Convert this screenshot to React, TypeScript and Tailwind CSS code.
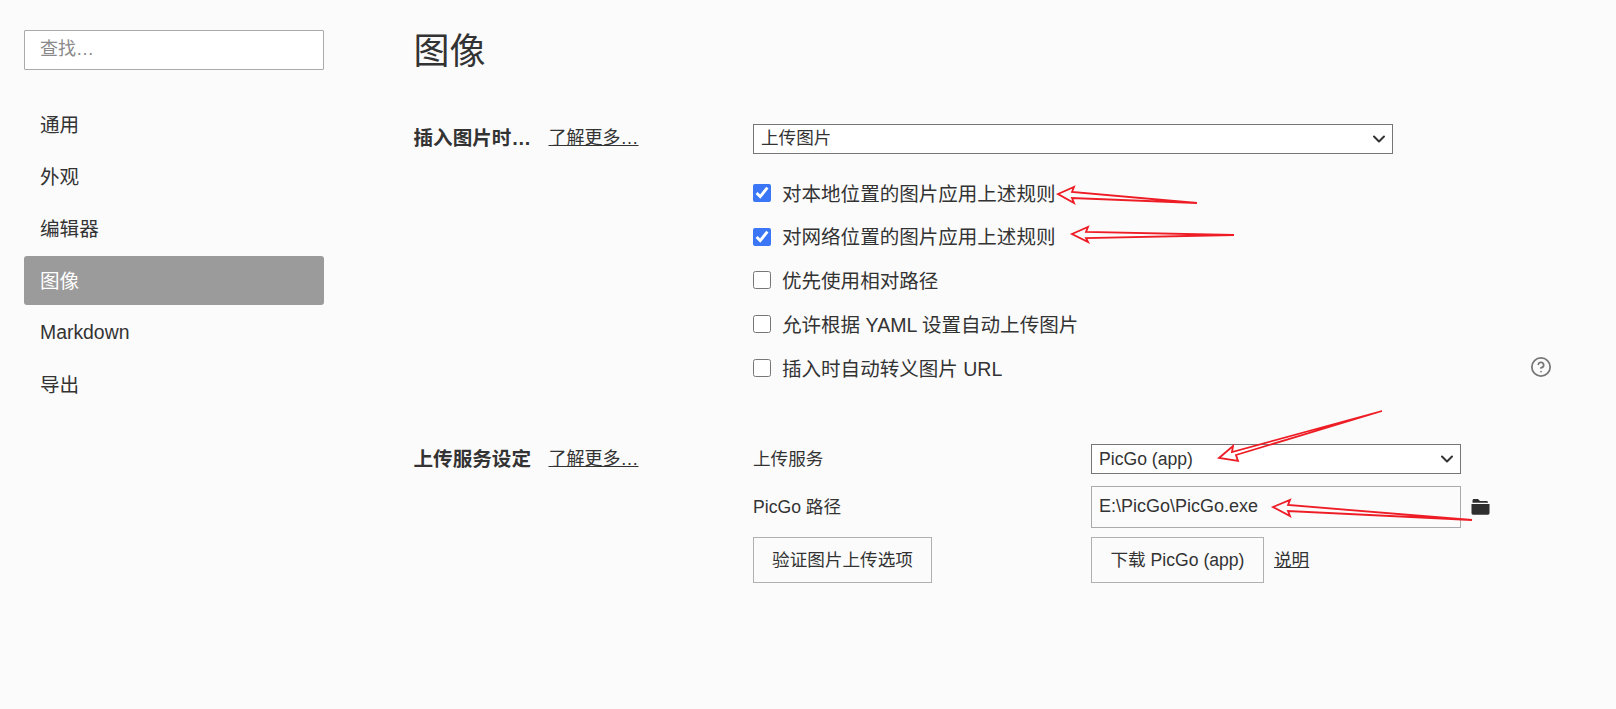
import { ChevronDown, CircleHelp } from "lucide-react";

const font = { fontFamily: '"Liberation Sans", "Noto Sans CJK SC", sans-serif' };

const nav = ["通用", "外观", "编辑器", "图像", "Markdown", "导出"];
const checks: [string, boolean, string][] = [
  ["对本地位置的图片应用上述规则", true, "a"],
  ["对网络位置的图片应用上述规则", true, "b"],
  ["优先使用相对路径", false, "c"],
  ["允许根据 YAML 设置自动上传图片", false, "d"],
  ["插入时自动转义图片 URL", false, "e"],
];

const arrows = [
  "M1197 203 L1072 192 L1074 187 L1058 194 L1074 203 L1072 198 Z",
  "M1234 235 L1086 232 L1088 227 L1072 234 L1088 242 L1086 238 Z",
  "M1382 411 L1232 452 L1233 446 L1219 458 L1238 461 L1236 455 Z",
  "M1472 520 L1288 505 L1290 500 L1273 507 L1290 516 L1288 511 Z",
];

function Select({ value, className }: { value: string; className: string }) {
  return (
    <div className={`relative h-[30px] border border-[#767676] bg-white flex items-center pl-[7px] text-[17.6px] text-[#333] ${className}`}>
      <span>{value}</span>
      <ChevronDown className="absolute right-[3px] top-[4px] text-[#333]" size={20} strokeWidth={2.4} />
    </div>
  );
}

function Label({ text }: { text: string }) {
  return (
    <div className="flex items-start w-[339.5px] shrink-0 leading-[24px]">
      <span className="w-[135px] text-[19.6px] font-bold text-[#333] whitespace-nowrap">{text}</span>
      <a className="text-[18px] underline text-[#333] whitespace-nowrap">了解更多…</a>
    </div>
  );
}

export default function App() {
  return (
    <div className="relative flex min-h-[709px] bg-[#fbfbfb] text-[#333] overflow-hidden" style={font}>
      <aside className="w-[413.5px] shrink-0 pl-6 pt-[30px]">
        <div className="w-[300px] h-[40px] border border-[#aaaaaa] rounded-[1px] bg-white flex items-center pl-[15px] pb-[2px] text-[18px] text-[#8a8a8a]">
          查找…
        </div>
        <nav className="w-[300px] mt-[30px] flex flex-col gap-[3px]">
          {nav.map((n) => (
            <div
              key={n}
              className={
                n === "图像"
                  ? "h-[49px] flex items-center pl-4 pt-[3px] rounded-[3px] bg-[#9b9b9b] text-white text-[19.6px]"
                  : n === "Markdown"
                    ? "h-[49px] flex items-center pl-4 text-[19.4px] text-[#333]"
                    : "h-[49px] flex items-center pl-4 pt-[3px] text-[19.6px] text-[#333]"
              }
            >
              {n}
            </div>
          ))}
        </nav>
      </aside>

      <main className="flex-1 pt-[25px]">
        <h1 className="text-[36px] leading-[48px] pt-[3px] h-[48px] font-normal text-[#333]">图像</h1>

        <section className="flex mt-[51px]">
          <div className="pt-[2px]">
            <Label text="插入图片时…" />
          </div>
          <div className="w-[799px]">
            <Select value="上传图片" className="w-[640px] pb-[2px]" />
            <div className="mt-[17px] flex flex-col">
              {checks.map(([t, c, id], i) => (
                <div key={id} className="h-[43.75px] flex items-center justify-between">
                  <label className="flex items-center text-[19.55px] text-[#333]">
                    <input
                      type="checkbox"
                      defaultChecked={c}
                      className="w-[18px] h-[18px] m-0 mr-[11px] accent-[#3a76f5]"
                    />
                    <span className="pt-[3px]">{t}</span>
                  </label>
                  {i === 4 && <CircleHelp size={22} strokeWidth={1.9} className="text-[#777] ml-[1px] mb-[1px]" />}
                </div>
              ))}
            </div>
          </div>
        </section>

        <section className="flex mt-[54px]">
          <div className="pt-[3px]">
            <Label text="上传服务设定" />
          </div>
          <div className="flex flex-col">
            <div className="flex items-center h-[30px]">
              <span className="w-[338px] text-[17.6px] text-[#333]">上传服务</span>
              <Select value="PicGo (app)" className="w-[370px]" />
            </div>
            <div className="flex items-center h-[42px] mt-[12px]">
              <span className="w-[338px] text-[17.6px] text-[#333]">PicGo 路径</span>
              <div className="w-[370px] h-[42px] border border-[#aaaaaa] flex items-center pl-[7px] text-[18px]">
                E:\PicGo\PicGo.exe
              </div>
              <svg className="ml-[10px]" width="19" height="16" viewBox="0 0 19 16" fill="#2f2f2f">
                <path d="M1.5 3 V1.6 C1.5 .7 2.2 0 3 0 H7 L9 2 H15.5 C16.3 2 17 2.6 17 3.3 V3.8 H1.5 Z" />
                <path d="M.5 5 H18.5 V14 C18.5 15 17.8 15.7 17 15.7 H2 C1.2 15.7 .5 15 .5 14 Z" />
              </svg>
            </div>
            <div className="flex items-center h-[46px] mt-[9px]">
              <div className="w-[338px]">
                <button className="w-[179px] h-[46px] border border-[#b0b0b0] text-[17.6px] text-[#333]">
                  验证图片上传选项
                </button>
              </div>
              <button className="w-[173px] h-[46px] border border-[#b0b0b0] text-[17.6px] text-[#333]">
                下载 PicGo (app)
              </button>
              <a className="ml-[10px] text-[17.6px] underline text-[#333]">说明</a>
            </div>
          </div>
        </section>
      </main>

      <svg className="absolute inset-0 pointer-events-none" width="1616" height="709" fill="none" stroke="#ee1c25" strokeWidth="1.8" strokeLinejoin="miter">
        {arrows.map((d) => (
          <path key={d} d={d} />
        ))}
      </svg>
    </div>
  );
}
